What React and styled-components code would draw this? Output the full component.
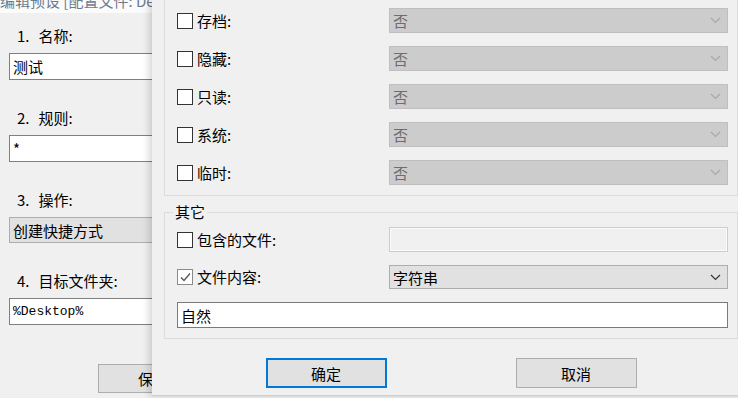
import React from "react";
import styled, { createGlobalStyle } from "styled-components";

const Global = createGlobalStyle`
  html, body {
    margin: 0;
    padding: 0;
    overflow: hidden;
    background: #f0f0f0;
  }
  body {
    font-family: "Noto Sans CJK SC", "Noto Sans", sans-serif;
    font-size: 15px;
    color: #000;
  }
`;

const Chevron = ({ dark }) => (
  <svg width="11" height="7" viewBox="0 0 11 7">
    <path
      d="M1 1 L5.5 5.5 L10 1"
      fill="none"
      stroke={dark ? "#333" : "#a8a8a8"}
      strokeWidth="1.2"
    />
  </svg>
);

const LeftFields = [
  { label: "1.", name: "名称:", value: "测试", kind: "input" },
  { label: "2.", name: "规则:", value: "*", kind: "input" },
  { label: "3.", name: "操作:", value: "创建快捷方式", kind: "select" },
  { label: "4.", name: "目标文件夹:", value: "%Desktop%", kind: "mono" },
];

const AttrRows = ["存档:", "隐藏:", "只读:", "系统:", "临时:"];

const App = () => {
  return (
    <>
      <Global />
      <S.Page>
        <S.LeftPane>
          <S.TitleStrip>
            <span>编辑预设 [配置文件: Default]</span>
          </S.TitleStrip>
          <S.LeftBody>
            {LeftFields.map((f) => (
              <S.Field key={f.label}>
                <S.FieldLabel>
                  <span>{f.label}</span>
                  {f.name}
                </S.FieldLabel>
                {f.kind === "select" ? (
                  <S.LeftSelect>{f.value}</S.LeftSelect>
                ) : (
                  <S.LeftInput mono={f.kind === "mono"}>{f.value}</S.LeftInput>
                )}
              </S.Field>
            ))}
            <S.SaveButton>保存</S.SaveButton>
          </S.LeftBody>
        </S.LeftPane>

        <S.Dialog>
          <S.AttrGroup>
            {AttrRows.map((name) => (
              <S.Row key={name}>
                <S.Check>
                  <S.Box />
                  {name}
                </S.Check>
                <S.Select disabled>
                  否
                  <Chevron />
                </S.Select>
              </S.Row>
            ))}
          </S.AttrGroup>

          <S.OtherGroup>
            <S.Legend>其它</S.Legend>
            <S.Row>
              <S.Check>
                <S.Box />
                包含的文件:
              </S.Check>
              <S.DisabledInput />
            </S.Row>
            <S.Row tall={24}>
              <S.Check>
                <S.Box checked>
                  <svg width="13" height="13" viewBox="0 0 13 13">
                    <path
                      d="M2 6.5 L5 9.5 L11 2.5"
                      fill="none"
                      stroke="#555"
                      strokeWidth="1.3"
                    />
                  </svg>
                </S.Box>
                文件内容:
              </S.Check>
              <S.Select>
                字符串
                <Chevron dark />
              </S.Select>
            </S.Row>
            <S.TextInput>自然</S.TextInput>
          </S.OtherGroup>

          <S.Buttons>
            <S.Button primary>确定</S.Button>
            <S.Button>取消</S.Button>
          </S.Buttons>
        </S.Dialog>
      </S.Page>
    </>
  );
};

export default App;

const S = {
  Page: styled.div`
    display: flex;
    width: 750px;
    height: 398px;
    overflow: hidden;
  `,

  LeftPane: styled.div`
    width: 152px;
    flex: none;
    display: flex;
    flex-direction: column;
    overflow: hidden;
    background: #f0f0f0;
  `,

  TitleStrip: styled.div`
    height: 13px;
    background: #fbfbfb;
    display: flex;
    align-items: flex-end;
    overflow: hidden;

    span {
      white-space: nowrap;
      line-height: 20px;
      margin-bottom: 2px;
      font-size: 15px;
      color: #6b7b90;
      flex: none;
    }
  `,

  LeftBody: styled.div`
    display: flex;
    flex-direction: column;
    gap: 28px;
    padding: 13px 0 0 9px;
  `,

  Field: styled.div`
    display: flex;
    flex-direction: column;
    gap: 7px;
  `,

  FieldLabel: styled.div`
    line-height: 20px;
    padding-left: 8px;
    white-space: nowrap;

    span {
      margin-right: 9px;
    }
  `,

  LeftInput: styled.div`
    width: 200px;
    height: 27px;
    box-sizing: border-box;
    background: #fff;
    border: 1px solid #7f7f7f;
    padding-left: 3px;
    display: flex;
    align-items: center;
    white-space: nowrap;
    font-family: ${(p) =>
      p.mono ? `"Liberation Mono", monospace` : `inherit`};
    font-size: ${(p) => (p.mono ? "13px" : "15px")};
  `,

  LeftSelect: styled.div`
    width: 200px;
    height: 26px;
    box-sizing: border-box;
    background: #e1e1e1;
    border: 1px solid #adadad;
    padding-left: 3px;
    display: flex;
    align-items: center;
    white-space: nowrap;
  `,

  SaveButton: styled.div`
    margin: 11px 0 0 89px;
    width: 110px;
    height: 29px;
    flex: none;
    box-sizing: border-box;
    background: #e1e1e1;
    border: 1px solid #adadad;
    display: flex;
    align-items: center;
    justify-content: center;
  `,

  Dialog: styled.div`
    width: 598px;
    height: 396px;
    flex: none;
    box-sizing: border-box;
    padding: 0 12px;
    background: #f0f0f0;
    border-bottom: 1px solid #cfcfcf;
    box-shadow: -3px 0 7px rgba(0, 0, 0, 0.16);
    display: flex;
    flex-direction: column;
    position: relative;
  `,

  AttrGroup: styled.div`
    border: 1px solid #dcdcdc;
    border-top: none;
    padding: 8px 9px 10px 12px;
    display: flex;
    flex-direction: column;
    gap: 13px;
  `,

  OtherGroup: styled.fieldset`
    margin: 6px 0 0;
    min-width: 0;
    border: 1px solid #dcdcdc;
    padding: 5px 9px 10px 12px;
    display: flex;
    flex-direction: column;
    gap: 13px;
  `,

  Legend: styled.legend`
    padding: 0 2px;
    margin-left: -4px;
    line-height: 20px;
  `,

  Row: styled.div`
    display: flex;
    align-items: center;
    height: ${(p) => p.tall || 25}px;
  `,

  Check: styled.label`
    width: 212px;
    flex: none;
    display: flex;
    align-items: center;
    gap: 4px;
    line-height: 20px;
    white-space: nowrap;
  `,

  Box: styled.span`
    width: 16px;
    height: 16px;
    box-sizing: border-box;
    border: 1px solid ${(p) => (p.checked ? "#8a8a8a" : "#333")};
    background: #fff;
    display: flex;
    align-items: center;
    justify-content: center;
  `,

  Select: styled.div`
    flex: 1;
    height: 100%;
    box-sizing: border-box;
    background: ${(p) => (p.disabled ? "#cccccc" : "#e1e1e1")};
    border: 1px solid ${(p) => (p.disabled ? "#bfbfbf" : "#adadad")};
    color: ${(p) => (p.disabled ? "#6d6d6d" : "#000")};
    padding: 0 6px 0 3px;
    display: flex;
    align-items: center;
    justify-content: space-between;
  `,

  DisabledInput: styled.div`
    flex: 1;
    height: 100%;
    box-sizing: border-box;
    background: #f0f0f0;
    border: 1px solid #cccccc;
    box-shadow: inset 0 0 0 1px #fbfbfb;
  `,

  TextInput: styled.div`
    height: 26px;
    box-sizing: border-box;
    background: #fff;
    border: 1px solid #7a7a7a;
    padding-left: 3px;
    display: flex;
    align-items: center;
  `,

  Buttons: styled.div`
    margin-top: 19px;
    display: flex;
    justify-content: center;
    gap: 129px;
  `,

  Button: styled.div`
    width: 121px;
    height: 30px;
    box-sizing: border-box;
    background: #e1e1e1;
    border: ${(p) => (p.primary ? "2px solid #0078d7" : "1px solid #adadad")};
    display: flex;
    align-items: center;
    justify-content: center;
  `,
};
